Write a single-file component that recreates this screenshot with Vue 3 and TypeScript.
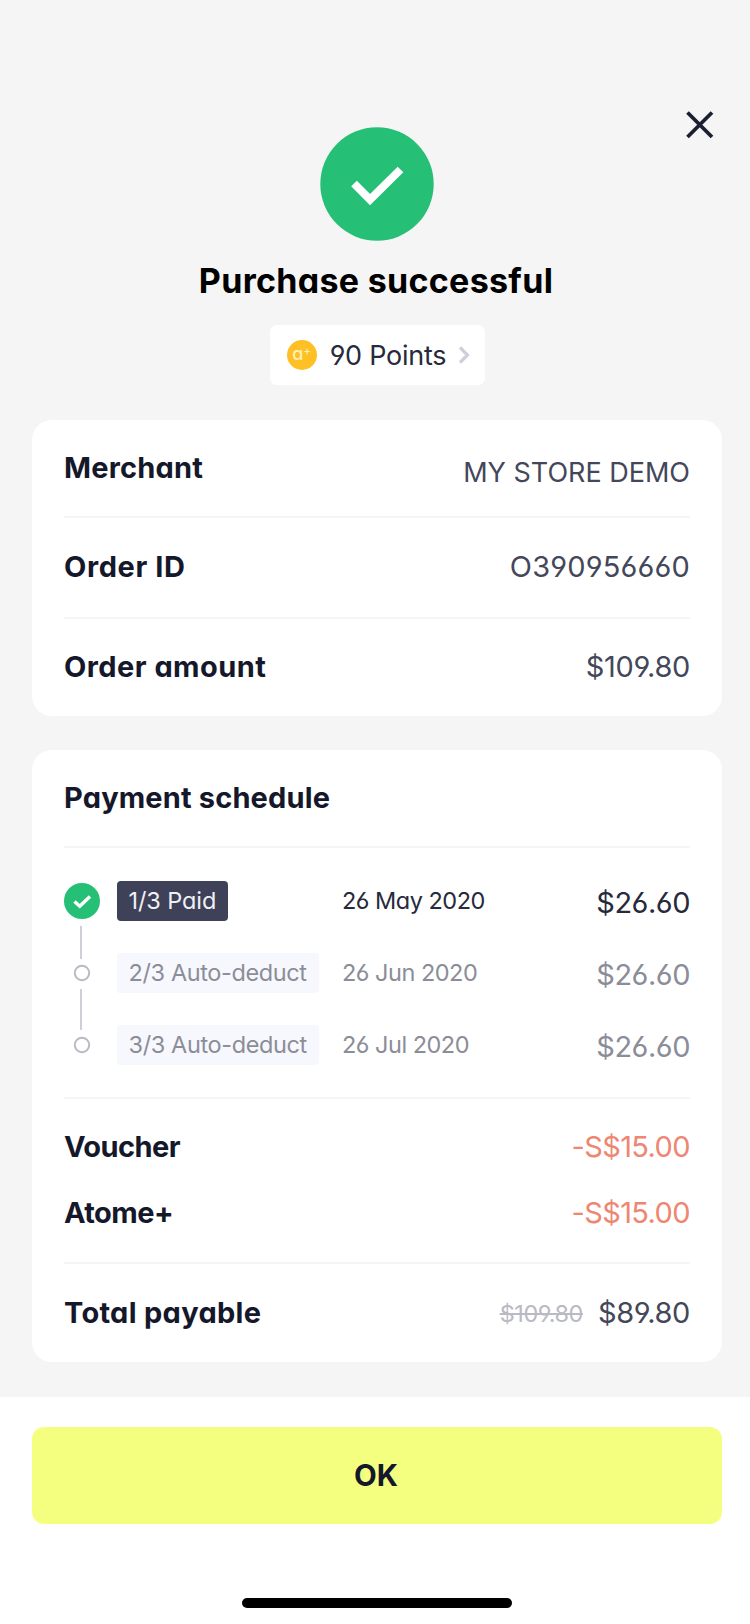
<script setup lang="ts">
interface Detail { label: string; value: string; kind: string }
interface Instalment { label: string; date: string; amount: string; paid: boolean }

const details: Detail[] = [
  { label: 'Merchant', value: 'MY STORE DEMO', kind: 'merchant' },
  { label: 'Order ID', value: 'O390956660', kind: 'order-id' },
  { label: 'Order amount', value: '$109.80', kind: 'order-amount' },
]
const instalments: Instalment[] = [
  { label: '1/3 Paid', date: '26 May 2020', amount: '$26.60', paid: true },
  { label: '2/3 Auto-deduct', date: '26 Jun 2020', amount: '$26.60', paid: false },
  { label: '3/3 Auto-deduct', date: '26 Jul 2020', amount: '$26.60', paid: false },
]
const discounts = [
  { label: 'Voucher', value: '-S$15.00' },
  { label: 'Atome+', value: '-S$15.00' },
]
</script>

<template>
  <main class="screen">
    <button class="close" aria-label="Close">
      <svg width="30" height="30" viewBox="0 0 30 30"><path d="M2.5 2.5 27 27M27 2.5 2.5 27" /></svg>
    </button>
    <header class="hero">
      <svg class="tick" width="114" height="114" viewBox="0 0 114 114">
        <circle cx="57" cy="57" r="56.7" />
        <path d="M34 56.5 50 72.5 80.5 42.5" />
      </svg>
      <h1>Purchase successful</h1>
      <button class="points">
        <span class="coin"><span>a</span><span class="coin-plus">+</span></span>
        <span class="points-text">90 Points</span>
        <svg class="chevron" width="14" height="20" viewBox="0 0 14 20"><path d="M3 2.5 10.5 10 3 17.5" /></svg>
      </button>
    </header>

    <section class="card">
      <div v-for="d in details" :key="d.label" class="row" :class="d.kind">
        <span class="label">{{ d.label }}</span>
        <span class="value">{{ d.value }}</span>
      </div>
    </section>

    <section class="card schedule">
      <div class="row heading"><h2 class="label">Payment schedule</h2></div>
      <ol class="plan">
        <li v-for="(p, i) in instalments" :key="p.label" class="step" :class="{ paid: p.paid }">
          <span class="marker">
            <svg v-if="p.paid" width="36" height="36" viewBox="0 0 36 36">
              <circle class="done" cx="18" cy="18" r="18" />
              <path class="mark" d="M10.5 18.5 15.8 23.3 26 13.5" />
            </svg>
            <svg v-else width="18" height="18" viewBox="0 0 18 18"><circle class="todo" cx="9" cy="9" r="7.2" /></svg>
            <i v-if="i < instalments.length - 1" class="link" :class="{ long: !p.paid }"></i>
          </span>
          <span><span class="tag">{{ p.label }}</span></span>
          <span class="date">{{ p.date }}</span>
          <span class="value">{{ p.amount }}</span>
        </li>
      </ol>
      <div class="discounts">
        <div v-for="d in discounts" :key="d.label" class="discount">
          <span class="label">{{ d.label }}</span>
          <span class="value">{{ d.value }}</span>
        </div>
      </div>
      <div class="row total">
        <span class="label">Total payable</span>
        <span class="prices"><s>$109.80</s><span class="value">$89.80</span></span>
      </div>
    </section>

    <footer class="footer">
      <button class="ok">OK</button>
      <div class="home"></div>
    </footer>
  </main>
</template>

<style>
html, body { margin: 0; background: #f5f5f5; }
</style>

<style scoped>
* { box-sizing: border-box; }
.screen {
  position: relative;
  width: 750px;
  height: 1624px;
  display: flex;
  flex-direction: column;
  background: #f5f5f5;
  color: #15182b;
  font-family: Inter, "Liberation Sans", sans-serif;
  font-feature-settings: "cv11" 1, "cv03" 1, "cv04" 1;
}
button { border: 0; padding: 0; margin: 0; background: none; font: inherit; color: inherit; font-feature-settings: inherit; }
h1, h2, ol { margin: 0; padding: 0; font-weight: inherit; list-style: none; }
svg { display: block; }

.close { position: absolute; left: 685px; top: 110px; width: 30px; height: 30px; }
.close path { fill: none; stroke: #1b1f33; stroke-width: 3.8; }

.hero { height: 420px; padding-top: 127px; display: flex; flex-direction: column; align-items: center; flex: none; }
.tick { margin-left: 4px; fill: #26bf76; }
.tick path { fill: none; stroke: #fff; stroke-width: 8; }
h1 { margin: 18px 0 0 2px; height: 44px; line-height: 44px; font-size: 34px; font-weight: 700; letter-spacing: 0.3px; color: #000; }
.points { margin: 22px 0 0 4px; width: 215px; height: 60px; display: flex; align-items: center; padding-left: 17px; background: #fff; border-radius: 7px; }
.coin { width: 30px; height: 30px; border-radius: 50%; background: #fec024; color: #fff0b8; display: flex; justify-content: center; font-weight: 500; line-height: 27px; font-size: 18px; }
.coin-plus { font-size: 11px; line-height: 22px; }
.points-text { margin-left: 13px; width: 117px; white-space: nowrap; font-size: 27px; letter-spacing: -0.25px; color: #272a3c; }
.chevron { margin-left: 10px; }
.chevron path { fill: none; stroke: #cfcfda; stroke-width: 3.2; }

.card { margin: 0 28px 0 32px; height: 296px; flex: none; padding: 0 32px; background: #fff; border-radius: 20px; }
.row { height: 97px; display: flex; align-items: center; justify-content: space-between; }
.label { font-size: 29px; font-weight: 700; }
.value { font-size: 29px; color: #44475a; }

.merchant { height: 96px; padding-bottom: 1px; }
.merchant .label { letter-spacing: 0.2px; }
.merchant .value { font-size: 27px; padding-top: 9px; }
.order-id { height: 101px; padding-bottom: 2px; border-top: 2px solid #f5f5f5; }
.order-id .label { letter-spacing: 0.6px; }
.order-id .value { letter-spacing: 0.15px; }
.order-amount { height: 99px; padding-bottom: 3px; border-top: 2px solid #f5f5f5; }
.order-amount .label { letter-spacing: 0.45px; }
.order-amount .value { letter-spacing: -0.35px; }

.schedule { margin-top: 34px; height: 612px; }
.heading { height: 96px; padding-bottom: 1px; }
.heading .label { letter-spacing: 0.15px; }
.plan { height: 251px; border-top: 2px solid #f5f5f5; padding-top: 17px; }
.step { height: 72px; display: grid; grid-template-columns: 52.5px 225.5px 1fr auto; align-items: center; color: #8b8d98; font-size: 23.5px; }
.step .value { color: #8b8d98; padding-top: 3px; letter-spacing: -0.5px; }
.date { padding-bottom: 1px; letter-spacing: -0.5px; }
.step.paid, .step.paid .value { color: #272a3c; }
.marker { position: relative; width: 36px; display: flex; justify-content: center; }
.done { fill: #26bf76; }
.mark { fill: none; stroke: #fff; stroke-width: 3.4; }
.todo { fill: #fff; stroke: #b9bac2; stroke-width: 2; }
.link { position: absolute; left: 16px; top: 43px; width: 2px; height: 33px; background: #cfcfdb; }
.link.long { top: 25px; height: 41px; }
.tag { display: inline-block; height: 40px; line-height: 39px; padding: 0 12px; border-radius: 3px; background: #f7f8fe; letter-spacing: -0.38px; }
.paid .tag { background: #3e4158; color: #eef0f6; border-radius: 4px; letter-spacing: -0.1px; }

.discounts { height: 165px; padding-top: 14px; border-top: 2px solid #f5f5f5; }
.discount { height: 66px; display: flex; align-items: center; justify-content: space-between; }
.discount .label { letter-spacing: -0.55px; }
.discount .value { color: #ef8672; letter-spacing: -0.6px; }
.total { height: 100px; padding-bottom: 2px; border-top: 2px solid #f5f5f5; }
.total .label { letter-spacing: 0.3px; }
.total .value { letter-spacing: -0.4px; }
.prices { display: flex; align-items: center; gap: 15px; }
.prices s { font-size: 23.5px; letter-spacing: -0.45px; color: #b9bac4; padding-top: 3px; }

.footer { margin-top: 35px; height: 227px; flex: none; padding: 30px 28px 0 32px; background: #fff; }
.ok { display: block; width: 690px; height: 97px; padding: 0 2px 2px 0; border-radius: 12px; background: #f4ff80; font-size: 29.5px; font-weight: 700; }
.home { width: 270px; height: 10px; margin: 74px 0 0 210px; border-radius: 5px; background: #000; }
</style>
